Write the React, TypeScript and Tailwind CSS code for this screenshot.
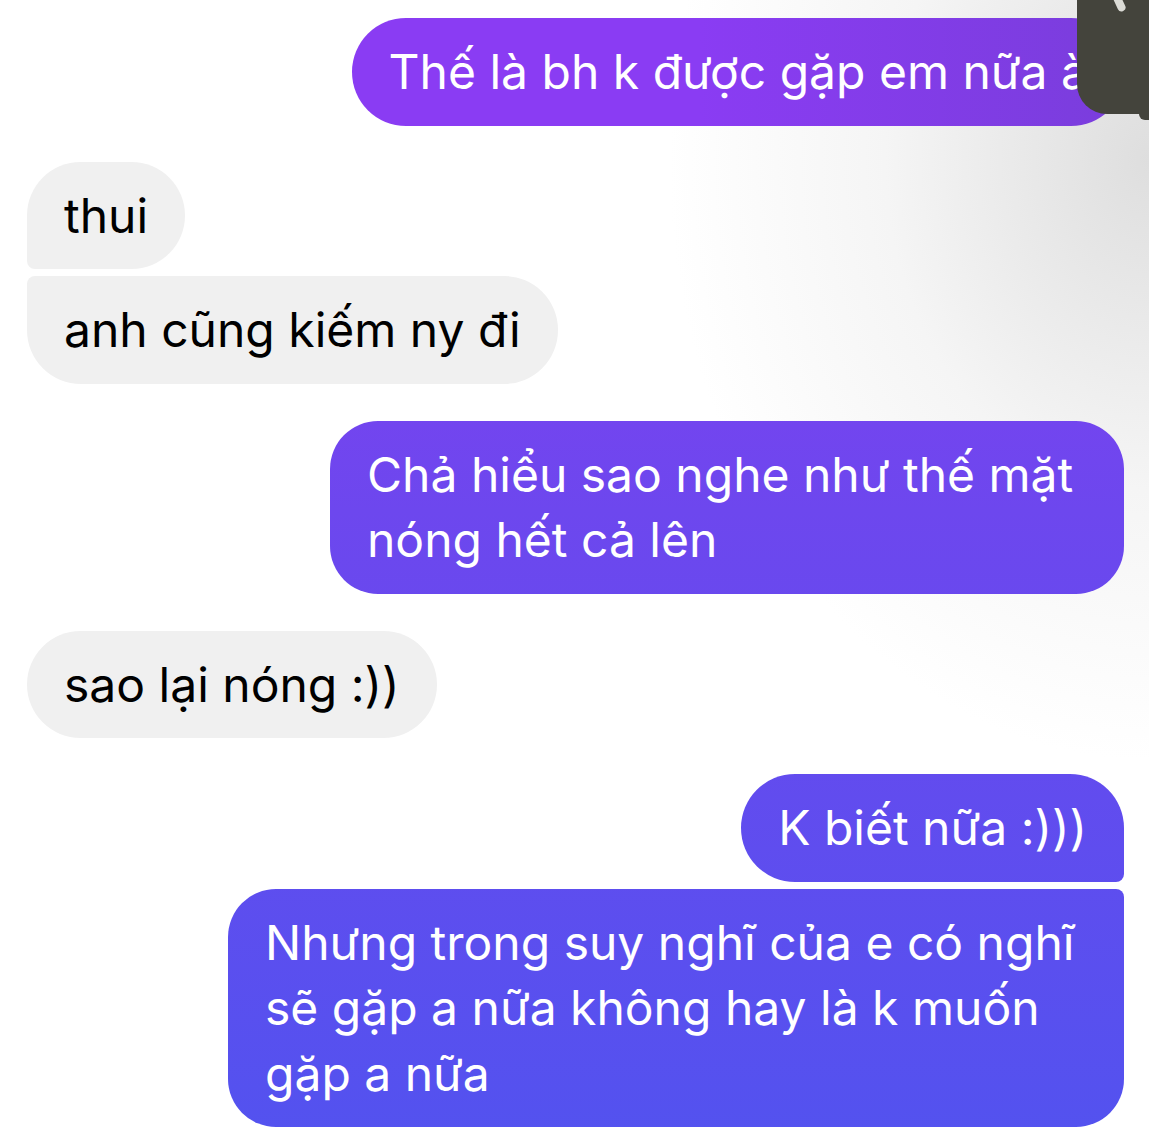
import React from 'react'

const purple = 'bg-fixed bg-[linear-gradient(to_bottom,#8b3cf3_0%,#6d47ee_45%,#5352ef_100%)] text-white'
const gray = 'bg-[#f0f0f0] text-black'

function Bubble({ className, children }: { className: string; children: React.ReactNode }) {
  return <div className={`px-[37px] py-[21px] text-[48px] leading-[65.5px] ${className}`}>{children}</div>
}

export default function App() {
  return (
    <div
      className="relative h-[1135px] w-[1149px] overflow-hidden bg-white bg-[radial-gradient(ellipse_480px_600px_at_100%_160px,#dedede_0%,#f5f5f5_55%,#ffffff_100%)]"
      style={{ fontFamily: 'Inter, "Noto Sans", sans-serif' }}
    >
      <div className="flex flex-col pt-[18px]">
        <div className="flex justify-end pr-[24px]">
          <Bubble className="rounded-[54px] bg-[linear-gradient(to_right,#8a3cf3_45%,#7a3ddc)] text-white">
            Thế là bh k được gặp em nữa à
          </Bubble>
        </div>

        <div className="mt-[36px] flex flex-col items-start gap-[7px] pl-[27px]">
          <Bubble className={`${gray} rounded-[54px] rounded-bl-[8px]`}>thui</Bubble>
          <Bubble className={`${gray} rounded-[54px] rounded-tl-[8px]`}>anh cũng kiếm ny đi</Bubble>
        </div>

        <div className="mt-[37px] flex justify-end pr-[25px]">
          <Bubble className={`${purple} w-[794px] rounded-[48px]`}>
            Chả hiểu sao nghe như thế mặt
            <br />
            nóng hết cả lên
          </Bubble>
        </div>

        <div className="mt-[37px] flex pl-[27px]">
          <Bubble className={`${gray} rounded-[54px]`}>sao lại nóng :))</Bubble>
        </div>

        <div className="mt-[36px] flex flex-col items-end gap-[7px] pr-[25px]">
          <Bubble className={`${purple} rounded-[54px] rounded-br-[8px]`}>K biết nữa :)))</Bubble>
          <Bubble className={`${purple} w-[896px] rounded-[48px] rounded-tr-[8px]`}>
            Nhưng trong suy nghĩ của e có nghĩ
            <br />
            sẽ gặp a nữa không hay là k muốn
            <br />
            gặp a nữa
          </Bubble>
        </div>
      </div>

      {/* dark object over the top-right corner */}
      <div className="absolute right-0 top-0 h-[114px] w-[72px] rounded-bl-[30px] bg-[#44443c]" />
      <div className="absolute right-0 top-[100px] h-[20px] w-[10px] rounded-bl-[6px] bg-[#44443c]" />
      <div className="absolute right-[26px] top-[-8px] h-[20px] w-[8px] rotate-[-25deg] rounded-full bg-[#dcdcd6]" />
    </div>
  )
}
